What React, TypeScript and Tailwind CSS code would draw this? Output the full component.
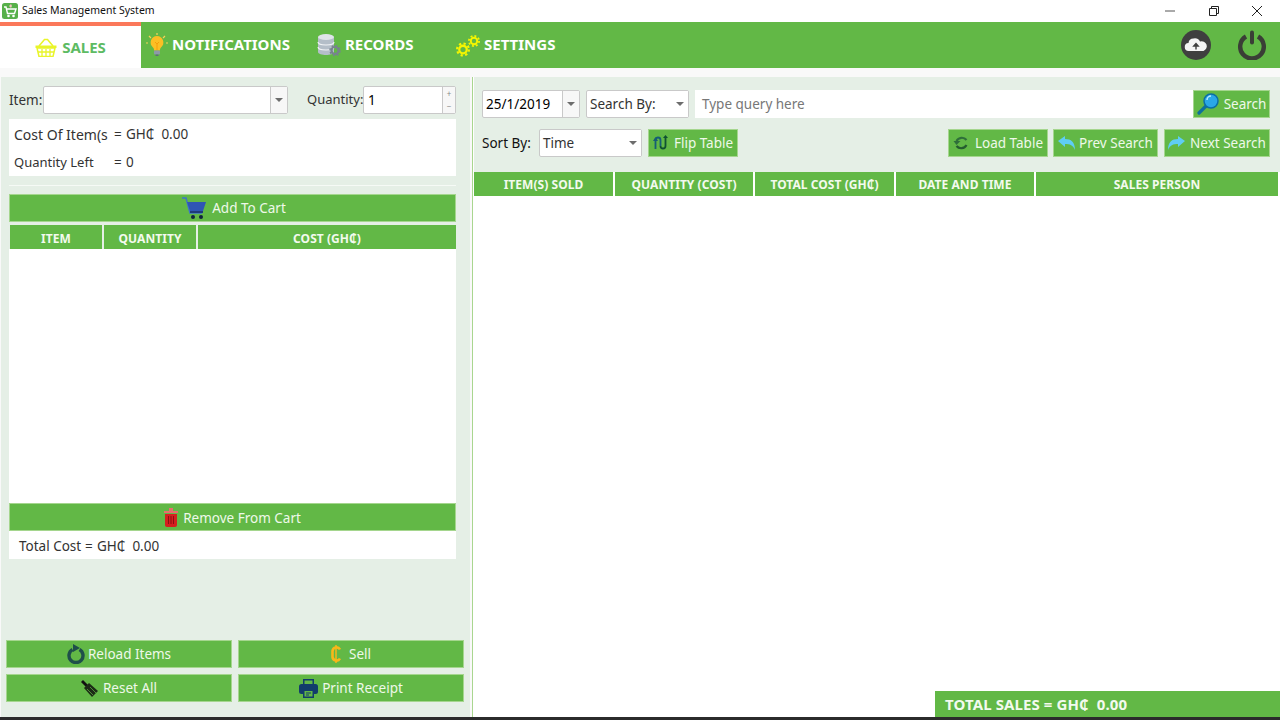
import React from "react";

const G = "bg-[#62b846]";

const Caret = () => (
  <svg width="8" height="4" viewBox="0 0 8 4" className="shrink-0"><path d="M0 0h8L4 4z" fill="#6d6d6d" /></svg>
);

const Basket = () => (
  <svg width="22" height="19" viewBox="0 0 22 19" fill="none">
    <path d="M4 8L9.500 1.500h3L18 8" stroke="#e9f52a" strokeWidth="1.600" />
    <path d="M0.500 7.500h21v2.500h-21z" fill="#e9f52a" />
    <path d="M2 10h18l-2 8.500H4z" stroke="#e9f52a" strokeWidth="1.500" />
    <path d="M7 11v7M11 11v7M15 11v7M3 14h16" stroke="#e9f52a" strokeWidth="1.300" />
  </svg>
);
const Bulb = () => (
  <svg width="22" height="24" viewBox="0 0 22 24">
    <g stroke="#f6d25a" strokeWidth="1.200"><path d="M11 0v2M3 3l2 2M19 3l-2 2M0 10h2M20 10h2" /></g>
    <path d="M11 3a6.500 6.500 0 0 0-4 11.500c1 1 1 2 1 3h6c0-1 0-2 1-3A6.500 6.500 0 0 0 11 3z" fill="#fbbf24" />
    <path d="M9 9l2 2 2-2M11 11v6" stroke="#f59e0b" strokeWidth="1" fill="none" />
    <rect x="8" y="17.500" width="6" height="4" rx="1" fill="#8d99a8" />
    <rect x="9.500" y="21.500" width="3" height="1.500" fill="#5f6b7a" />
  </svg>
);
const Db = () => (
  <svg width="24" height="24" viewBox="0 0 24 24">
    <path d="M1 4v15c0 2 4 3 8 3s8-1 8-3V4z" fill="#b4bec8" />
    <ellipse cx="9" cy="4" rx="8" ry="3" fill="#dfe4e9" />
    <path d="M1 9c0 2 4 3 8 3s8-1 8-3M1 14c0 2 4 3 8 3s8-1 8-3" stroke="#f0f3f5" strokeWidth="1.200" fill="none" />
    <circle cx="18" cy="17.500" r="3.500" fill="none" stroke="#77838f" strokeWidth="2.200" />
    <circle cx="18" cy="17.500" r="5" fill="none" stroke="#77838f" strokeWidth="1.500" strokeDasharray="2 1.900" />
  </svg>
);
const Gear = ({ s }: { s: number }) => (
  <svg width={s} height={s} viewBox="0 0 16 16">
    <circle cx="8" cy="8" r="4.300" fill="none" stroke="#f5f500" strokeWidth="2.600" />
    <circle cx="8" cy="8" r="6.800" fill="none" stroke="#f5f500" strokeWidth="2.400" strokeDasharray="2.600 2.700" />
  </svg>
);
const Gears = () => (
  <span className="flex h-[24px] w-[24px] items-end">
    <Gear s={15} />
    <span className="mb-[10px] -ml-[2px]"><Gear s={12} /></span>
  </span>
);
const Cloud = () => (
  <svg width="30" height="30" viewBox="0 0 30 30">
    <circle cx="15" cy="15" r="15" fill="#3f3f3f" />
    <path d="M8 21a4 4 0 0 1-.500-8 5 5 0 0 1 5-4.500 6 6 0 0 1 6.500 3 5 5 0 0 1 3.500 9.500z" fill="#f4f4f4" />
    <path d="M15 19.500v-4M12.800 16l2.200-2.500 2.200 2.500z" stroke="#3f3f3f" strokeWidth="1.400" fill="#3f3f3f" />
  </svg>
);
const Power = () => (
  <svg width="30" height="30" viewBox="0 0 30 30">
    <path d="M9 6.500a11.800 11.800 0 1 0 12 0" fill="none" stroke="#3a3e36" strokeWidth="4.400" />
    <path d="M15 2.500v10" stroke="#3a3e36" strokeWidth="4" strokeLinecap="round" />
  </svg>
);
const CartIcon = () => (
  <svg width="24" height="23" viewBox="0 0 24 23">
    <path d="M0 1h4l4 15h12" stroke="#3f74c9" strokeWidth="1.500" fill="none" />
    <path d="M5 5h19l-3 9H8z" fill="#2f55b5" />
    <path d="M8 14h13v2H8z" fill="#1f3a7a" />
    <circle cx="11" cy="20" r="2" fill="#10233f" />
    <circle cx="19" cy="20" r="2" fill="#10233f" />
  </svg>
);
const Trash = () => (
  <svg width="14" height="19" viewBox="0 0 14 19">
    <path d="M0 3h14v2H0zM5 0h4v3H5z" fill="#e86d6d" />
    <path d="M1 6h12v11a2 2 0 0 1-2 2H3a2 2 0 0 1-2-2z" fill="#d51f1f" />
    <path d="M4.500 8v8M7 8v8M9.500 8v8" stroke="#8a1010" strokeWidth="1" />
  </svg>
);
const Reload = () => (
  <svg width="18" height="20" viewBox="0 0 18 20">
    <path d="M5.500 5.500a7 7 0 1 0 7 0" fill="none" stroke="#1f4f4a" strokeWidth="3.400" />
    <path d="M6 0l7 4-7 4z" fill="#1f4f4a" />
  </svg>
);
const Brush = () => (
  <svg width="17" height="17" viewBox="0 0 17 17">
    <path d="M0 2l2-2 5 5-2 2z" fill="#111" />
    <path d="M3 8l5-5 9 8-6 6z" fill="#1c2b16" />
    <path d="M6 9l6 6M9 7l6 6" stroke="#62b846" strokeWidth=".7" />
  </svg>
);
const Printer = () => (
  <svg width="19" height="19" viewBox="0 0 19 19">
    <path d="M4 0h11v5H4z" fill="#123d6b" />
    <rect x="0" y="5" width="19" height="10" rx="2.500" fill="#123d6b" />
    <path d="M4 11h11v8H4z" fill="#123d6b" />
    <path d="M5.500 12h8v5.500h-8z" fill="#62b846" />
    <path d="M5.500 1.500h8V5h-8z" fill="#62b846" />
    <path d="M7 14h5M7 16h3" stroke="#123d6b" />
  </svg>
);
const Flip = () => (
  <svg width="16" height="16" viewBox="0 0 16 16" fill="none" strokeWidth="1.800">
    <path d="M2.500 14V5a2.500 2.500 0 0 1 5 0v6" stroke="#155e75" />
    <path d="M7.500 11a2.500 2.500 0 0 0 5 0V3" stroke="#0f5132" />
    <path d="M0 6l2.500-4L5 6z" fill="#155e75" />
    <path d="M10 3l2.500-3L15 3z" fill="#0f5132" />
  </svg>
);
const Lens = () => (
  <svg width="22" height="22" viewBox="0 0 22 22">
    <path d="M9 13L2 20" stroke="#0e6f9c" strokeWidth="3.200" strokeLinecap="round" />
    <circle cx="14" cy="8" r="7" fill="#2aa7e6" stroke="#0b6ea3" strokeWidth="1.500" />
    <path d="M10 7a4 4 0 0 1 4-4" stroke="#b8ecff" strokeWidth="1.500" fill="none" />
  </svg>
);
const LoadI = () => (
  <svg width="17" height="14" viewBox="0 0 16 14" fill="none">
    <path d="M13 4A6 6 0 0 0 3 5" stroke="#2f6f3a" strokeWidth="2.200" />
    <path d="M3 10a6 6 0 0 0 10-1" stroke="#255c2f" strokeWidth="2.200" />
    <path d="M0 5h7L3 9z" fill="#2f6f3a" />
  </svg>
);
const Arrow = ({ flip }: { flip?: boolean }) => (
  <svg width="17" height="14" viewBox="0 0 17 14" className={flip ? "-scale-x-100" : ""}>
    <path d="M0 5l7-5v3c6 0 10 3 10 11-2-5-5-6-10-6v3z" fill="#5fcdf4" />
  </svg>
);
const Cedi = () => (
  <svg width="10" height="18" viewBox="0 0 10 18" fill="none">
    <path d="M9 4.500A4 4 0 0 0 1.500 6v6A4 4 0 0 0 9 13.500" stroke="#f9b719" strokeWidth="2.600" />
    <path d="M5 0v18" stroke="#f9b719" strokeWidth="1.500" />
  </svg>
);
const Logo = () => (
  <svg width="16" height="16" viewBox="0 0 16 16">
    <rect width="16" height="16" rx="2.500" fill="#57b04a" />
    <path d="M2 4h2l1.500 6.500h7L14 6H5" stroke="#fff" strokeWidth="1.400" fill="none" />
    <path d="M7 3l2-2 1 2-1 2z" fill="#f3c1c1" />
    <circle cx="6.500" cy="13" r="1.300" fill="#fff" />
    <circle cx="11.500" cy="13" r="1.300" fill="#fff" />
  </svg>
);

const NavTab = ({ icon, label, cls }: { icon: React.ReactNode; label: string; cls: string }) => (
  <div className={`flex h-[46px] items-center gap-[4px] pb-[1px] ${cls}`}>
    {icon}
    <span className="text-[15px] font-bold leading-none text-white">{label}</span>
  </div>
);

const Btn = ({ children, cls = "" }: { children: React.ReactNode; cls?: string }) => (
  <div className={`flex items-center justify-center border border-[#a5d68e] text-[13.500px] leading-none text-[#eef8e9] ${G} ${cls}`}>{children}</div>
);

const Lbl = ({ children, cls = "pt-[2px]" }: { children: React.ReactNode; cls?: string }) => (
  <span className={cls}>{children}</span>
);

const Th = ({ children, cls }: { children: React.ReactNode; cls: string }) => (
  <div className={`flex items-center justify-center text-[12px] font-bold tracking-[0.05px] text-[#f3faee] ${G} ${cls}`}>{children}</div>
);

const Combo = ({ text, cls, dim, divider, tcls = "" }: { text?: string; cls: string; dim?: boolean; divider?: boolean; tcls?: string }) => (
  <div className={`flex items-center rounded-[2px] border border-[#c9c9c9] bg-white ${cls}`}>
    <span className={`flex-1 pl-[3px] text-[13.500px] ${dim ? "text-[#333]" : "text-black"} ${tcls}`}>{text}</span>
    <span className={`flex h-full w-[17px] items-center justify-center bg-[#f7f7f7] ${divider ? "border-l border-[#c9c9c9]" : "bg-white"}`}>
      <Caret />
    </span>
  </div>
);

const Money = () => (
  <span className="flex">
    <span className="w-[12px]">=</span>
    <span>GH₵</span>
    <span className="ml-[7px]">0.00</span>
  </span>
);

export default function App() {
  return (
    <div
      className="flex h-[720px] w-[1280px] flex-col overflow-hidden bg-white text-[13.500px] text-[#333]"
      style={{ fontFamily: '"Noto Sans", "DejaVu Sans", sans-serif' }}
    >
      {/* title bar */}
      <div className="flex h-[22px] shrink-0 items-center bg-white pl-[2px]">
        <Logo />
        <span className="ml-[4px] text-[10.500px] text-[#111]">Sales Management System</span>
        <div className="ml-auto flex items-center">
          <svg width="10" height="10" viewBox="0 0 10 10" className="mr-[33px]"><path d="M0 5h10" stroke="#555" /></svg>
          <svg width="12" height="12" viewBox="0 0 12 12" className="mr-[31px]" fill="none" stroke="#222"><path d="M1.500 3.500h7v7h-7zM3.500 3.500v-2h7v7h-2" /></svg>
          <svg width="12" height="12" viewBox="0 0 12 12" className="mr-[17px]" fill="none" stroke="#222"><path d="M1 1l10 10M11 1L1 11" /></svg>
        </div>
      </div>

      {/* nav */}
      <div className={`flex h-[46px] shrink-0 items-stretch ${G}`}>
        <div className="flex w-[141px] items-center justify-center gap-[5px] border-t-[4px] border-[#fb785a] bg-white pt-[1px]">
          <Basket />
          <span className="text-[15px] font-bold text-[#5dbb63]">SALES</span>
        </div>
        <NavTab icon={<Bulb />} label="NOTIFICATIONS" cls="ml-[5px] w-[171px]" />
        <NavTab icon={<Db />} label="RECORDS" cls="w-[139px]" />
        <NavTab icon={<Gears />} label="SETTINGS" cls="" />
        <div className="ml-auto flex items-center gap-[26px] pr-[13px]">
          <Cloud />
          <Power />
        </div>
      </div>

      {/* body */}
      <div className="flex min-h-0 flex-1 bg-[#f9f9f9] pt-[9px]">
        {/* left */}
        <div className="ml-[1px] flex w-[469px] shrink-0 flex-col bg-[#e5efe6]">
          <div className="mt-[9px] flex h-[28px] items-center pl-[8px]">
            <span className="w-[34px]">Item:</span>
            <Combo cls="h-[28px] w-[245px]" divider />
            <span className="ml-[19px] w-[56px] whitespace-nowrap text-[13px]">Quantity:</span>
            <div className="flex h-[28px] w-[93px] items-center rounded-[2px] border border-[#c9c9c9] bg-white">
              <span className="flex-1 pl-[4px] text-black">1</span>
              <span className="flex h-full w-[13px] flex-col items-center justify-center border-l border-[#c9c9c9] bg-[#f7f7f7] text-[8px] leading-[12px] text-[#888]">
                <span>+</span>
                <span>−</span>
              </span>
            </div>
          </div>
          <div className="ml-[8px] mt-[5px] flex h-[57px] w-[447px] flex-col justify-center gap-[9px] bg-white pl-[5px] pt-[2px]">
            <div className="flex h-[19px] items-center">
              <span className="w-[100px] text-[14px]">Cost Of Item(s</span>
              <Money />
            </div>
            <div className="flex h-[19px] items-center">
              <span className="w-[100px] text-[13px]">Quantity Left</span>
              <span className="w-[12px]">=</span>
              <span>0</span>
            </div>
          </div>
          <div className="ml-[8px] mt-[9px] h-[1px] w-[447px] bg-[#f6faf6]" />
          <Btn cls="ml-[8px] mt-[8px] h-[28px] w-[447px] gap-[6px] pl-[3px]"><CartIcon /><Lbl>Add To Cart</Lbl></Btn>
          <div className="ml-[9px] mt-[3px] flex h-[24px] w-[446px] gap-[2px]">
            <Th cls="w-[92px] pt-[3px]">ITEM</Th>
            <Th cls="w-[92px] pt-[3px]">QUANTITY</Th>
            <Th cls="flex-1 pt-[3px]">COST (GH₵)</Th>
          </div>
          <div className="ml-[8px] h-[254px] w-[447px] bg-white" />
          <Btn cls="ml-[8px] h-[28px] w-[447px] gap-[5px]"><Trash /><Lbl cls="pt-[4px]">Remove From Cart</Lbl></Btn>
          <div className="ml-[8px] flex h-[28px] w-[447px] items-center bg-white pl-[10px] pt-[2px]">
            <span className="w-[66px]">Total Cost</span>
            <Money />
          </div>
          <div className="mb-[15px] ml-[5px] mt-auto grid w-[458px] grid-cols-2 gap-x-[6px] gap-y-[6px]">
            <Btn cls="h-[28px] gap-[3px]"><Reload /><Lbl>Reload Items</Lbl></Btn>
            <Btn cls="h-[28px] gap-[8px]"><Cedi /><Lbl>Sell</Lbl></Btn>
            <Btn cls="h-[28px] gap-[5px]"><Brush /><Lbl>Reset All</Lbl></Btn>
            <Btn cls="h-[28px] gap-[4px]"><Printer /><Lbl>Print Receipt</Lbl></Btn>
          </div>
        </div>

        {/* divider */}
        <div className="ml-[2px] w-[1px] bg-[#a9d68f]" />

        {/* right */}
        <div className="flex min-w-0 flex-1 flex-col bg-white pl-[1px]">
          <div className="flex h-[95px] flex-col bg-[#e5efe6] pl-[8px] pr-[10px]">
            <div className="mt-[13px] flex h-[28px] items-center">
              <Combo text="25/1/2019" cls="h-[28px] w-[98px]" divider />
              <Combo text="Search By:" cls="ml-[6px] h-[28px] w-[103px]" dim />
              <div className="ml-[6px] flex h-[28px] flex-1 items-center bg-white pl-[7px] text-[#777]">Type query here</div>
              <Btn cls="h-[28px] w-[77px] gap-[5px]"><Lens /><Lbl>Search</Lbl></Btn>
            </div>
            <div className="mt-[10px] flex h-[29px] items-center">
              <span className="w-[57px] pt-[2px] text-[#111]">Sort By:</span>
              <Combo text="Time" cls="h-[28px] w-[103px]" dim tcls="pt-[2px]" />
              <Btn cls="ml-[6px] h-[28px] w-[90px] gap-[5px]"><Flip /><Lbl>Flip Table</Lbl></Btn>
              <Btn cls="ml-auto h-[28px] w-[100px] gap-[5px]"><LoadI /><Lbl>Load Table</Lbl></Btn>
              <Btn cls="ml-[5px] h-[28px] w-[105px] gap-[4px]"><Arrow /><Lbl>Prev Search</Lbl></Btn>
              <Btn cls="ml-[6px] h-[28px] w-[106px] gap-[5px]"><Arrow flip /><Lbl>Next Search</Lbl></Btn>
            </div>
          </div>
          <div className="flex h-[24px] gap-[2px] pr-[2px]">
            <Th cls="w-[139px] pt-[2px]">ITEM(S) SOLD</Th>
            <Th cls="w-[138px] pt-[2px]">QUANTITY (COST)</Th>
            <Th cls="w-[139px] pt-[2px]">TOTAL COST (GH₵)</Th>
            <Th cls="w-[138px] pt-[2px]">DATE AND TIME</Th>
            <Th cls="flex-1 pt-[2px]">SALES PERSON</Th>
          </div>
          <div className="flex-1" />
          <div className={`flex h-[26px] w-[345px] items-center self-end pl-[10px] text-[15px] font-bold tracking-[0.1px] text-[#f3faee] ${G}`}>
            TOTAL SALES = GH₵ &nbsp;0.00
          </div>
        </div>
      </div>
      <div className="h-[3px] shrink-0 bg-[#2b2b2b]" />
    </div>
  );
}
